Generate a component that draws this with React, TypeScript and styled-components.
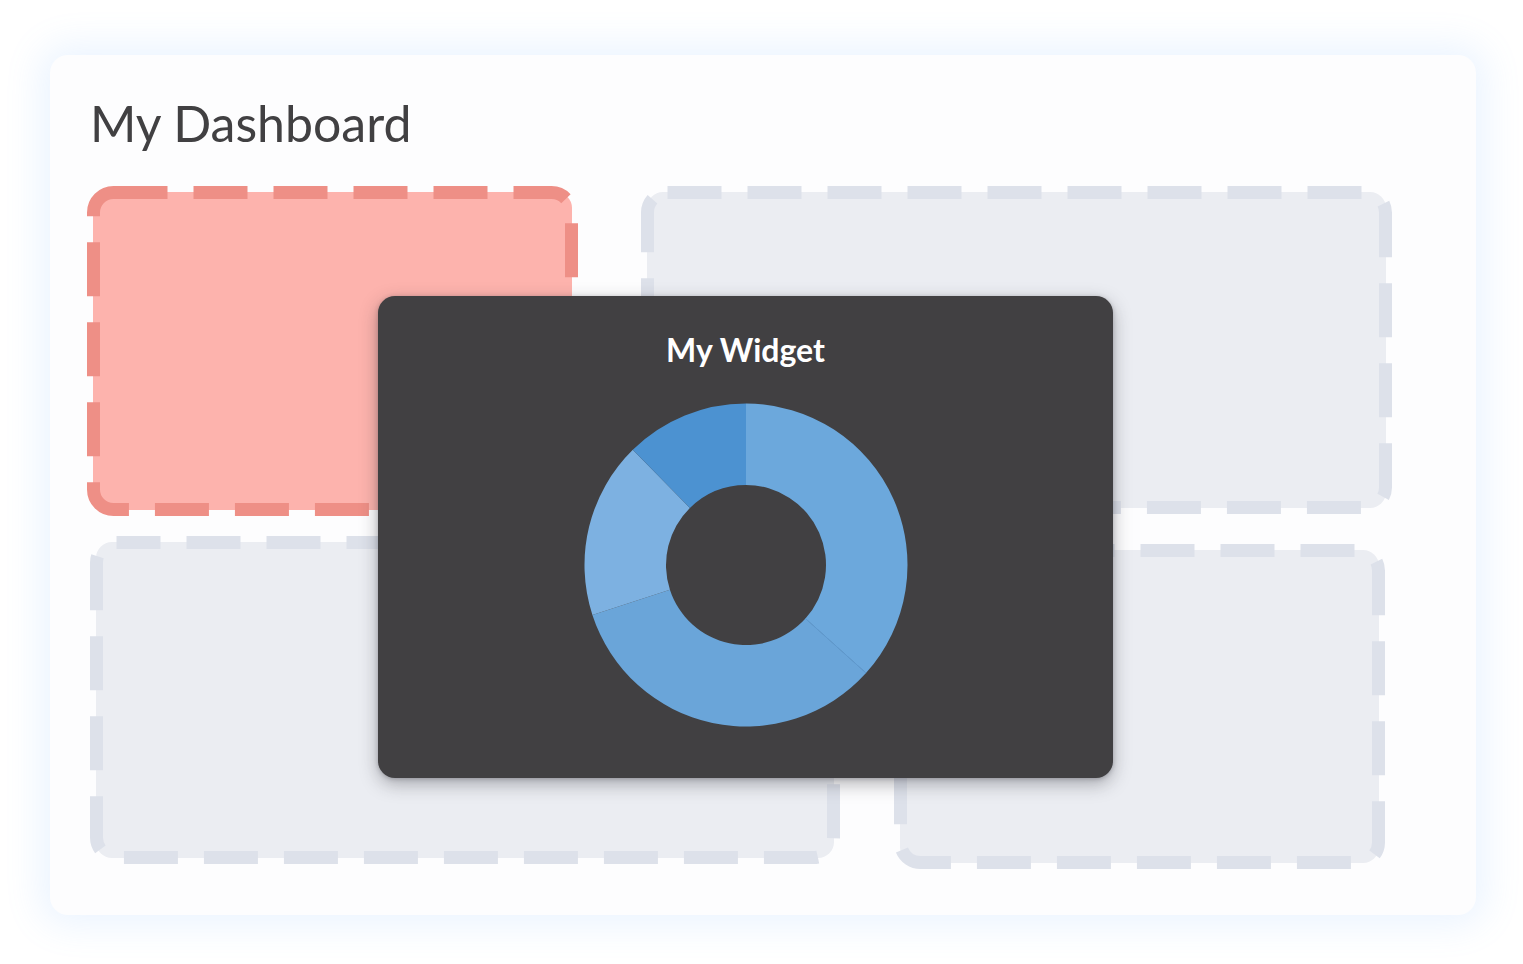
import React from "react";
import styled, { createGlobalStyle } from "styled-components";

const GlobalStyle = createGlobalStyle`
  html, body {
    margin: 0;
    padding: 0;
    background: #ffffff;
    font-family: Lato, "Open Sans", "Liberation Sans", sans-serif;
  }
`;

const Page = styled.div`
  width: 1523px;
  height: 964px;
  padding: 55px 0 0 50px;
  box-sizing: border-box;
  overflow: hidden;
`;

const Card = styled.div`
  position: relative;
  width: 1426px;
  height: 860px;
  box-sizing: border-box;
  padding: 38px 0 0 40px;
  border-radius: 18px;
  background: #fdfdfe;
  box-shadow: 0 0 36px 10px rgba(110, 175, 255, 0.14);
  display: flex;
  flex-direction: column;
`;

const Title = styled.h1`
  margin: 0;
  font-family: Lato, "Open Sans", sans-serif;
  font-weight: 400;
  font-size: 50px;
  line-height: normal;
  color: #414042;
`;

const Board = styled.div`
  margin-top: 33px;
  margin-left: -3px;
  display: flex;
  flex-direction: column;
  gap: 20px;
`;

const Row = styled.div<{ $gap: number; $offset: number }>`
  display: flex;
  align-items: flex-start;
  gap: ${(p) => p.$gap}px;
  margin-left: ${(p) => p.$offset}px;
`;

const Slot = styled.div<{ $w: number; $h: number; $top?: number; $fill: string }>`
  position: relative;
  flex: none;
  width: ${(p) => p.$w}px;
  height: ${(p) => p.$h}px;
  margin-top: ${(p) => p.$top ?? 0}px;

  &::before {
    content: "";
    position: absolute;
    inset: 6px;
    border-radius: 16px;
    background: ${(p) => p.$fill};
  }
`;

const DashFrame = styled.svg`
  position: absolute;
  inset: 0;
  overflow: visible;
  pointer-events: none;
`;

const Widget = styled.div`
  position: absolute;
  left: 328px;
  top: 241px;
  width: 735px;
  height: 482px;
  box-sizing: border-box;
  padding-top: 34px;
  border-radius: 17px;
  background: #414042;
  box-shadow: 0 6px 18px rgba(40, 40, 50, 0.35), 0 1px 4px rgba(40, 40, 50, 0.25);
  display: flex;
  flex-direction: column;
  align-items: center;
`;

const WidgetTitle = styled.h2`
  margin: 0;
  font-family: Lato, "Open Sans", sans-serif;
  font-weight: 700;
  font-size: 32px;
  line-height: normal;
  color: #ffffff;
`;

const ChartBox = styled.div`
  margin-top: 34px;
  width: 324px;
  height: 324px;
`;

type SlotProps = {
  w: number;
  h: number;
  top?: number;
  fill: string;
  dash: string;
  offset: number;
};

const DashedSlot: React.FC<SlotProps> = ({ w, h, top, fill, dash, offset }) => (
  <Slot $w={w} $h={h} $top={top} $fill={fill}>
    <DashFrame width={w} height={h} viewBox={`0 0 ${w} ${h}`}>
      <rect
        x={6.5}
        y={6.5}
        width={w - 13}
        height={h - 13}
        rx={20}
        ry={20}
        fill="none"
        stroke={dash}
        strokeWidth={13}
        strokeDasharray="54 26"
        strokeDashoffset={offset}
      />
    </DashFrame>
  </Slot>
);

const segments: { from: number; to: number; color: string }[] = [
  { from: 0, to: 132, color: "#6ca8dc" },
  { from: 132, to: 252, color: "#6aa5d9" },
  { from: 252, to: 315.5, color: "#7db1e1" },
  { from: 315.5, to: 360, color: "#4c92d1" },
];

const pt = (cx: number, cy: number, r: number, deg: number) => {
  const a = (deg * Math.PI) / 180;
  return [cx + r * Math.sin(a), cy - r * Math.cos(a)];
};

const arcPath = (from: number, to: number, R: number, r: number, c: number) => {
  const [x1, y1] = pt(c, c, R, from);
  const [x2, y2] = pt(c, c, R, to);
  const [x3, y3] = pt(c, c, r, to);
  const [x4, y4] = pt(c, c, r, from);
  const large = to - from > 180 ? 1 : 0;
  return `M ${x1} ${y1} A ${R} ${R} 0 ${large} 1 ${x2} ${y2} L ${x3} ${y3} A ${r} ${r} 0 ${large} 0 ${x4} ${y4} Z`;
};

const Donut: React.FC = () => (
  <svg width={324} height={324} viewBox="0 0 324 324">
    {segments.map((s) => (
      <path key={s.from} d={arcPath(s.from, s.to, 161.5, 80, 162)} fill={s.color} />
    ))}
    <line
      x1={pt(162, 162, 80, 132)[0]}
      y1={pt(162, 162, 80, 132)[1]}
      x2={pt(162, 162, 161.5, 132)[0]}
      y2={pt(162, 162, 161.5, 132)[1]}
      stroke="#5f9ad0"
      strokeWidth={1}
    />
  </svg>
);

export default function App() {
  return (
    <>
      <GlobalStyle />
      <Page>
        <Card>
          <Title>My Dashboard</Title>
          <Board>
            <Row $gap={63} $offset={0}>
              <DashedSlot w={491} h={330} fill="#fdb3ad" dash="#ee8f86" offset={0} />
              <DashedSlot w={751} h={328} fill="#ebedf2" dash="#dde1ea" offset={0} />
            </Row>
            <Row $gap={54} $offset={3}>
              <DashedSlot w={750} h={328} fill="#ebedf2" dash="#dde1ea" offset={10} />
              <DashedSlot w={491} h={325} top={8} fill="#ebedf2" dash="#dde1ea" offset={20} />
            </Row>
          </Board>
          <Widget>
            <WidgetTitle>My Widget</WidgetTitle>
            <ChartBox>
              <Donut />
            </ChartBox>
          </Widget>
        </Card>
      </Page>
    </>
  );
}
